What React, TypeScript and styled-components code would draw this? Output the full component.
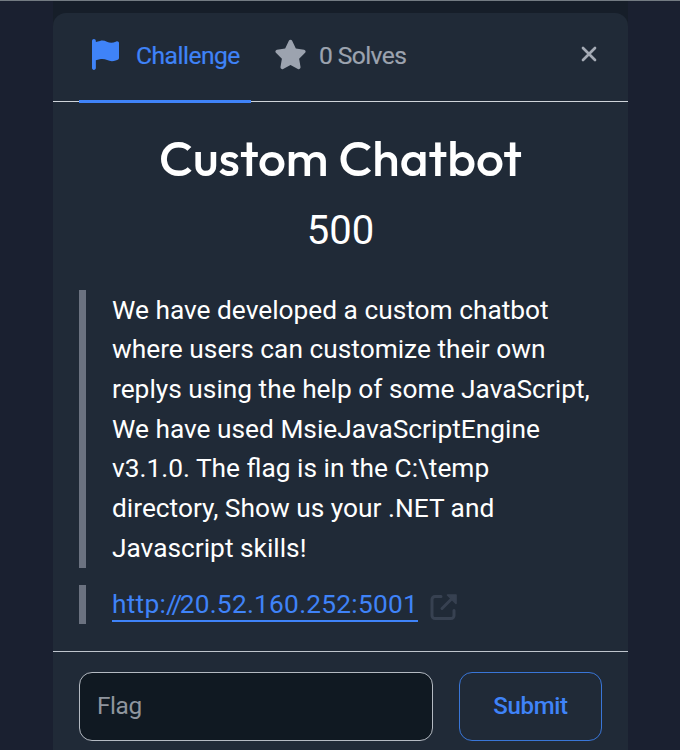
import React from "react";
import styled, { createGlobalStyle } from "styled-components";
import { FaFlag, FaStar } from "react-icons/fa6";

const GlobalStyle = createGlobalStyle`
  * { box-sizing: border-box; }
  body {
    margin: 0;
    background: #1a2030;
    font-family: Roboto, "Liberation Sans", sans-serif;
    overflow: hidden;
  }
`;

const Backdrop = styled.main`
  height: 750px;
  width: 680px;
  padding: 0 52px 0 53px;
  border-top: 1px solid #737b82;
  background: #1a2030;
`;

const Column = styled.div`
  height: 100%;
  padding-top: 12px;
  background: #161e29;
`;

const Dialog = styled.section`
  display: flex;
  flex-direction: column;
  height: 737px;
  border-radius: 13px 13px 0 0;
  background: #202a37;
`;

const Header = styled.header`
  display: flex;
  height: 89px;
  flex: none;
  padding: 0 27px 0 26px;
  border-bottom: 1px solid #cfd4da;
`;

const Tab = styled.button<{ $active?: boolean }>`
  display: flex;
  align-items: flex-start;
  height: 90px;
  width: ${(p) => (p.$active ? 172 : 168)}px;
  padding: ${(p) => (p.$active ? "26px 0 0 13px" : "26px 0 0 23px")};
  border: 0;
  border-bottom: 3px solid ${(p) => (p.$active ? "#3f83f8" : "transparent")};
  background: transparent;
  color: ${(p) => (p.$active ? "#3f83f8" : "#9ca3af")};
  font: 400 24.6px/33px Roboto, sans-serif;
  white-space: nowrap;

  svg { flex: none; height: 31px; width: ${(p) => (p.$active ? 27 : 33)}px; }
`;

const TabLabel = styled.span<{ $gap: number; $spacing: number }>`
  margin-left: ${(p) => p.$gap}px;
  letter-spacing: ${(p) => p.$spacing}px;
  -webkit-text-stroke: 0.2px currentColor;
`;

const CloseButton = styled.button`
  margin: 33px 4px 0 auto;
  width: 16px;
  height: 16px;
  padding: 0;
  border: 0;
  background: none;
  color: #a5abb5;

  svg { display: block; }
`;

const Body = styled.div`
  flex: none;
  height: 550px;
  padding: 26px 26px 0;
  border-bottom: 1px solid #bfc5cd;
  color: #fff;
`;

const Title = styled.h1`
  margin: 0;
  font: 500 49.6px/60px Outfit, Lato, sans-serif;
  text-align: center;
  white-space: nowrap;
`;

const Points = styled.p`
  margin: 17px 0 0;
  font-size: 40px;
  line-height: 51px;
  text-align: center;
`;

const Quote = styled.blockquote<{ $gap: number }>`
  margin: ${(p) => p.$gap}px 0 0;
  padding-left: 26px;
  border-left: 7px solid #6b7280;
  font-size: 26.3px;
  line-height: 39.7px;
  white-space: nowrap;
`;

const Description = styled.div`
  height: 278px;
  padding-top: 0.6px;
`;

const LinkRow = styled.div`
  display: flex;
  height: 39px;

  svg { margin: 8px 0 0 12px; }
`;

const Link = styled.a`
  width: 306px;
  height: 37px;
  border-bottom: 2px solid #3f83f8;
  color: #3f83f8;
  letter-spacing: 0.24px;
  text-decoration: none;
`;

const TightSlash = styled.span<{ $pull: number }>`
  letter-spacing: -${(p) => p.$pull}px;
`;

const Footer = styled.form`
  display: flex;
  gap: 26px;
  padding: 20px 26px 0;
`;

const FlagInput = styled.input`
  width: 354px;
  height: 69px;
  padding: 0 17px 3px;
  border: 1px solid #b4bac2;
  border-radius: 13px;
  background: #101922;
  font: 400 24.4px Roboto, sans-serif;
  letter-spacing: -0.4px;

  &::placeholder { color: #8f959e; opacity: 1; }
`;

const Submit = styled.button`
  width: 143px;
  height: 69px;
  padding: 0 0 2px;
  border: 1px solid #3976d8;
  border-radius: 13px;
  background: transparent;
  color: #3f83f8;
  font: 500 24px Roboto, sans-serif;
  letter-spacing: -0.35px;
`;

const description = [
  "We have developed a custom chatbot",
  "where users can customize their own",
  "replys using the help of some JavaScript,",
  "We have used MsieJavaScriptEngine",
  "v3.1.0. The flag is in the C:\\temp",
  "directory, Show us your .NET and",
  "Javascript skills!",
];

export default function App() {
  return (
    <>
      <GlobalStyle />
      <Backdrop>
        <Column>
          <Dialog>
            <Header>
              <Tab $active>
                <FaFlag />
                <TabLabel $gap={17} $spacing={-0.5}>Challenge</TabLabel>
              </Tab>
              <Tab>
                <FaStar />
                <TabLabel $gap={12} $spacing={-0.6}>0 Solves</TabLabel>
              </Tab>
              <CloseButton aria-label="Close">
                <svg width="16" height="16" viewBox="0 0 16 16" fill="none" stroke="currentColor" strokeWidth="2.7" strokeLinecap="round">
                  <path d="M2 2 14 14M14 2 2 14" />
                </svg>
              </CloseButton>
            </Header>
            <Body>
              <Title>Custom Chatbot</Title>
              <Points>500</Points>
              <Quote $gap={34}>
                <Description>
                  {description.map((line) => (
                    <React.Fragment key={line}>{line}<br /></React.Fragment>
                  ))}
                </Description>
              </Quote>
              <Quote $gap={17}>
                <LinkRow>
                  <Link href="http://20.52.160.252:5001">
                    http:<TightSlash $pull={5.5}>/</TightSlash>
                    <TightSlash $pull={2.6}>/</TightSlash>20.52.160.252:5001
                  </Link>
                  <svg width="28" height="28" viewBox="0 0 28 28" fill="none" stroke="#374151" strokeWidth="3" strokeLinecap="round" strokeLinejoin="round">
                    <path d="M11 3.5H5a3 3 0 0 0-3 3v16a3 3 0 0 0 3 3h16a3 3 0 0 0 3-3v-5M12 15.5 22 5.5" />
                    <path d="M17.5 2H26v8.5Z" fill="#374151" strokeWidth="1.6" />
                  </svg>
                </LinkRow>
              </Quote>
            </Body>
            <Footer onSubmit={(e) => e.preventDefault()}>
              <FlagInput placeholder="Flag" />
              <Submit>Submit</Submit>
            </Footer>
          </Dialog>
        </Column>
      </Backdrop>
    </>
  );
}
